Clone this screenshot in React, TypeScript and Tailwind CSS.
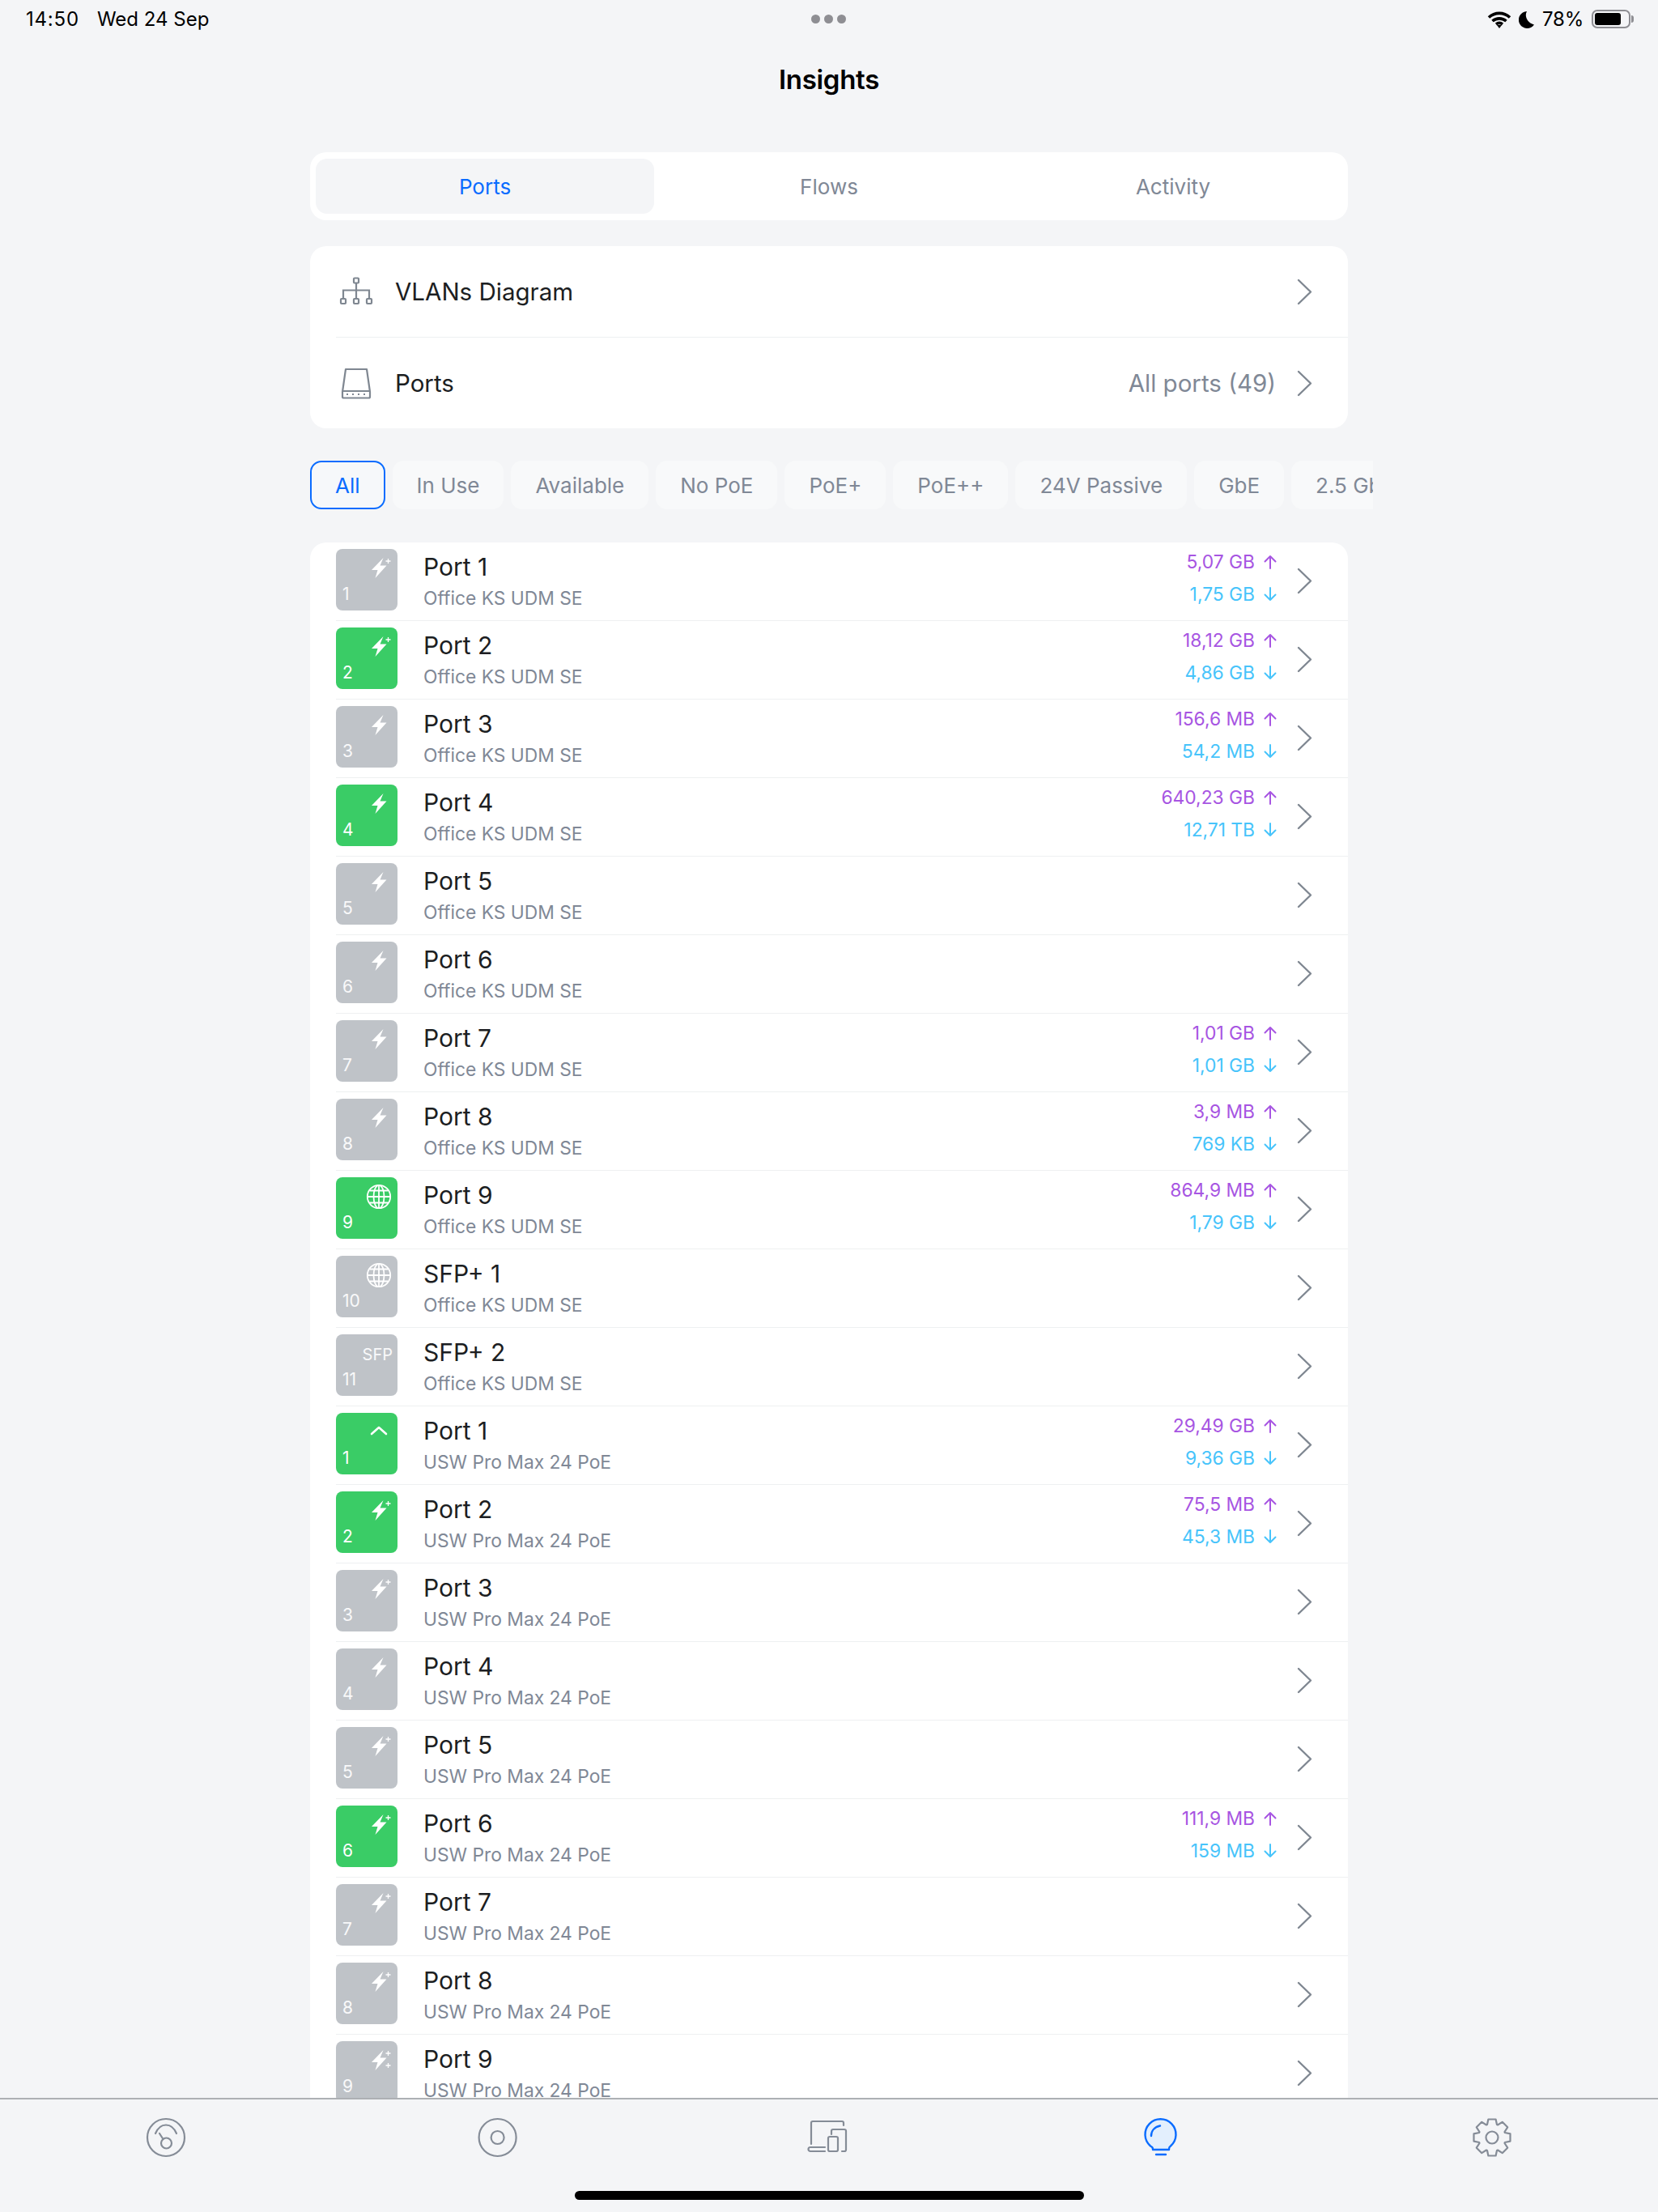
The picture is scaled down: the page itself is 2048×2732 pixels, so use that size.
import { ReactNode } from "react";

type PortIcon = "plus" | "bolt" | "globe" | "sfp" | "up" | "double";

type Port = {
  name: string;
  num: number;
  icon: PortIcon;
  on?: boolean;
  up?: string;
  down?: string;
};

const office: Port[] = [
  { name: "Port 1", num: 1, icon: "plus", up: "5,07 GB", down: "1,75 GB" },
  { name: "Port 2", num: 2, icon: "plus", on: true, up: "18,12 GB", down: "4,86 GB" },
  { name: "Port 3", num: 3, icon: "bolt", up: "156,6 MB", down: "54,2 MB" },
  { name: "Port 4", num: 4, icon: "bolt", on: true, up: "640,23 GB", down: "12,71 TB" },
  { name: "Port 5", num: 5, icon: "bolt" },
  { name: "Port 6", num: 6, icon: "bolt" },
  { name: "Port 7", num: 7, icon: "bolt", up: "1,01 GB", down: "1,01 GB" },
  { name: "Port 8", num: 8, icon: "bolt", up: "3,9 MB", down: "769 KB" },
  { name: "Port 9", num: 9, icon: "globe", on: true, up: "864,9 MB", down: "1,79 GB" },
  { name: "SFP+ 1", num: 10, icon: "globe" },
  { name: "SFP+ 2", num: 11, icon: "sfp" },
];

const usw: Port[] = [
  { name: "Port 1", num: 1, icon: "up", on: true, up: "29,49 GB", down: "9,36 GB" },
  { name: "Port 2", num: 2, icon: "plus", on: true, up: "75,5 MB", down: "45,3 MB" },
  { name: "Port 3", num: 3, icon: "plus" },
  { name: "Port 4", num: 4, icon: "bolt" },
  { name: "Port 5", num: 5, icon: "plus" },
  { name: "Port 6", num: 6, icon: "plus", on: true, up: "111,9 MB", down: "159 MB" },
  { name: "Port 7", num: 7, icon: "plus" },
  { name: "Port 8", num: 8, icon: "plus" },
  { name: "Port 9", num: 9, icon: "double" },
];

const chips = ["All", "In Use", "Available", "No PoE", "PoE+", "PoE++", "24V Passive", "GbE", "2.5 GbE"];

// gear outline, 8 teeth, in a 70 box
const gearPath = () => {
  const pts: string[] = [];
  for (let i = 0; i < 8; i++) {
    const a = (i * Math.PI) / 4 - Math.PI / 2;
    const step = 0.2;
    const rows: [number, number][] = [
      [17, a - 0.36],
      [23, a - step],
      [23, a + step],
      [17, a + 0.36],
    ];
    rows.forEach(([r, t]) => {
      pts.push(`${(35 + r * Math.cos(t)).toFixed(1)} ${(35 + r * Math.sin(t)).toFixed(1)}`);
    });
  }
  return "M" + pts.join("L") + "Z";
};

const Chevron = () => (
  <svg width="19" height="33" viewBox="0 0 19 33" fill="none" className="shrink-0">
    <path d="M2 2l15 14.5L2 31" stroke="#7f8791" strokeWidth="2.4" strokeLinecap="round" strokeLinejoin="round" />
  </svg>
);

const Bolt = () => <path d="M14.5 0 0 15h7.5L4.5 25 18.5 9.5H10.500z" fill="#fff" />;

const TileIcon = ({ icon }: { icon: PortIcon }) => {
  if (icon === "sfp") {
    return <span className="absolute top-[13px] right-[6px] text-[20px] leading-6 text-white/90">SFP</span>;
  }
  if (icon === "globe") {
    return (
      <svg width="32" height="32" viewBox="0 0 32 32" fill="none" stroke="#fff" strokeWidth="1.8" className="absolute top-[8px] left-[37px]">
        <circle cx="16" cy="16" r="14.2" />
        <ellipse cx="16" cy="16" rx="6.5" ry="14.2" />
        <path d="M16 2v28M2 16h28M4.5 8.5h23M4.5 23.5h23" />
      </svg>
    );
  }
  if (icon === "up") {
    return (
      <svg width="22" height="14" viewBox="0 0 22 14" fill="none" className="absolute top-[15px] left-[42px]">
        <path d="M2 11l9-8 9 8" stroke="#fff" strokeWidth="2.6" strokeLinecap="round" strokeLinejoin="round" />
      </svg>
    );
  }
  return (
    <svg width="28" height="28" viewBox="0 0 28 28" fill="none" className="absolute top-[10px] left-[42px]">
      <g transform="translate(2 1)">
        <Bolt />
      </g>
      {(icon === "plus" || icon === "double") && <path d="M19.5 5h6M22.5 2v6" stroke="#fff" strokeWidth="1.3" />}
      {icon === "double" && <path d="M19.5 20h6M22.5 17v6" stroke="#fff" strokeWidth="1.3" />}
    </svg>
  );
};

const ArrowUp = () => (
  <svg width="16" height="18" viewBox="0 0 16 18" fill="none" stroke="#a755e2" strokeWidth="2">
    <path d="M8 17V2M1.5 8.5 8 2l6.5 6.5" strokeLinecap="round" strokeLinejoin="round" />
  </svg>
);

const ArrowDown = () => (
  <svg width="16" height="18" viewBox="0 0 16 18" fill="none" stroke="#47c4fb" strokeWidth="2">
    <path d="M8 1v15M1.5 9.5 8 16l6.5-6.5" strokeLinecap="round" strokeLinejoin="round" />
  </svg>
);

const Row = ({ port, model }: { port: Port; model: string }) => (
  <div className="flex items-center h-[97px] pt-2 pb-3 pr-[44px] border-b border-[#eef0f1]">
    <div className={`relative w-[76px] h-[76px] rounded-[8px] shrink-0 ${port.on ? "bg-[#3acc66]" : "bg-[#bfc3c8]"}`}>
      <TileIcon icon={port.icon} />
      <span className={`absolute left-[8px] bottom-[7px] text-[21px] leading-[26px] ${port.on ? "text-white" : "text-white/90"}`}>{port.num}</span>
    </div>
    <div className="ml-[32px] flex-1 self-start">
      <div className="text-[30px] leading-9 text-[#1c1e22] mt-[4px]">{port.name}</div>
      <div className="text-[22.8px] leading-7 text-[#808896] mt-[7px]">{model}</div>
    </div>
    {port.up && (
      <div className="self-start mt-[2px] text-[22.8px] leading-7 text-right">
        <div className="flex items-center justify-end gap-[11px] text-[#a755e2]">
          {port.up}
          <ArrowUp />
        </div>
        <div className="flex items-center justify-end gap-[11px] text-[#47c4fb] mt-[12px]">
          {port.down}
          <ArrowDown />
        </div>
      </div>
    )}
    <div className="ml-[25px] mt-[2px]">
      <Chevron />
    </div>
  </div>
);

const NavIcon = ({ children }: { children: ReactNode }) => (
  <div className="flex justify-center">
    <svg width="70" height="70" viewBox="0 0 70 70" fill="none" stroke="#858c97" strokeWidth="2.2" strokeLinecap="round" strokeLinejoin="round">
      {children}
    </svg>
  </div>
);

export default function App() {
  return (
    <div className="h-[2732px] w-[2048px] flex flex-col overflow-hidden bg-[#f4f5f7] font-['Inter',sans-serif]">
      {/* status bar */}
      <div className="grid grid-cols-3 items-center h-[47px] pl-[30px] pr-[30px] text-[24px] text-black shrink-0">
        <div className="flex gap-[22px] ml-[2px]">
          <span className="tracking-[0.8px]">14:50</span>
          <span>Wed 24 Sep</span>
        </div>
        <div className="flex justify-center gap-[5px]">
          <span className="w-[11px] h-[11px] rounded-full bg-[#8e8e93]" />
          <span className="w-[11px] h-[11px] rounded-full bg-[#8e8e93]" />
          <span className="w-[11px] h-[11px] rounded-full bg-[#8e8e93]" />
        </div>
        <div className="flex items-center justify-end">
          <svg width="30" height="24" viewBox="0 0 30 24" fill="none" stroke="#000" strokeWidth="3.6">
            <path d="M2 9.5a19 19 0 0 1 26 0M6.5 14a13 13 0 0 1 17 0M11 18a6.5 6.5 0 0 1 8 0" />
            <path d="M15 23l-3-4h6z" fill="#000" stroke="none" />
          </svg>
          <svg width="20" height="24" viewBox="0 0 20 24" className="ml-[9px]">
            <path d="M10 2C7 7 9.500 16 19 18.500A10.500 10.500 0 1 1 10 2z" fill="#000" />
          </svg>
          <span className="ml-[9px] tracking-[-0.2px]">78%</span>
          <div className="ml-[10px] w-[48px] h-[23px] rounded-[7px] border-2 border-[#8e8e93] p-[2px]">
            <div className="w-[32px] h-full rounded-[3px] bg-black" />
          </div>
          <span className="ml-[1px] w-[3px] h-[9px] rounded-r-full bg-[#8e8e93]" />
        </div>
      </div>

      <h1 className="text-center text-[33px] leading-10 font-semibold text-black mt-[31px] tracking-[-0.3px] shrink-0">Insights</h1>

      <main className="flex-1 min-h-0 overflow-hidden pl-[383px] pr-[383px] pt-[70px]">
        {/* segmented */}
        <div className="grid grid-cols-3 gap-[7px] h-[84px] py-2 px-[7px] rounded-[20px] bg-white">
          <div className="flex items-center justify-center rounded-[14px] bg-[#f4f5f7] text-[26px] text-[#0a6cff]">Ports</div>
          <div className="flex items-center justify-center text-[26px] text-[#808896]">Flows</div>
          <div className="flex items-center justify-center text-[26px] text-[#808896]">Activity</div>
        </div>

        {/* links */}
        <div className="mt-[32px] rounded-[20px] bg-white">
          <div className="flex items-center h-[113px] ml-[32px] pr-[44px] border-b border-[#eef0f1]">
            <svg width="44" height="36" viewBox="0 0 44 36" fill="none" stroke="#7f8791" strokeWidth="2.2" className="shrink-0 ml-[3px]">
              <rect x="19" y="1.5" width="6" height="6" rx="1" />
              <rect x="3" y="27" width="6" height="6" rx="1" />
              <rect x="19" y="27" width="6" height="6" rx="1" />
              <rect x="35" y="27" width="6" height="6" rx="1" />
              <path d="M22 7.5V27M6 27V16.5h32V27" />
            </svg>
            <span className="ml-[26px] flex-1 text-[29.5px] text-[#1c1e22]">VLANs Diagram</span>
            <Chevron />
          </div>
          <div className="flex items-center h-[112px] ml-[32px] pr-[44px]">
            <svg width="44" height="40" viewBox="0 0 44 40" fill="none" stroke="#7f8791" strokeWidth="2.2" strokeLinejoin="round" className="shrink-0 ml-[3px]">
              <path d="M9 3h26l4 28v6a1.5 1.5 0 0 1-1.5 1.5h-31A1.5 1.5 0 0 1 5 37v-6z" />
              <path d="M5 30h34" />
              <path d="M10 34h24" strokeDasharray="2 5" />
            </svg>
            <span className="ml-[26px] flex-1 text-[29.5px] text-[#1c1e22]">Ports</span>
            <span className="text-[29.5px] text-[#808896] mr-[26px]">All ports (49)</span>
            <Chevron />
          </div>
        </div>

        {/* filter chips */}
        <div className="mt-[40px] flex gap-[9px] w-[1313px] overflow-hidden">
          {chips.map((c, i) => (
            <div
              key={c}
              className={`h-[60px] flex items-center rounded-[14px] text-[26px] whitespace-nowrap shrink-0 ${
                i === 0 ? "px-[29px] border-2 border-[#0a6cff] text-[#0a6cff] bg-[#f6f8fa]" : "px-[30px] bg-[#f8f9fa] text-[#808896]"
              }`}
            >
              {c}
            </div>
          ))}
        </div>

        {/* port list */}
        <div className="mt-[41px] rounded-t-[20px] bg-white pl-[32px]">
          {office.map((p) => (
            <Row key={`o${p.num}`} port={p} model="Office KS UDM SE" />
          ))}
          {usw.map((p) => (
            <Row key={`u${p.num}`} port={p} model="USW Pro Max 24 PoE" />
          ))}
        </div>
      </main>

      {/* tab bar */}
      <div className="shrink-0 h-[141px] border-t-2 border-[#adb0b4] bg-[#f4f5f7]">
        <div className="grid grid-cols-5 pt-[12px]">
          <NavIcon>
            <circle cx="35" cy="35" r="23" />
            <path d="M22 30c3-7 8-10.5 13-10.5S45 23 48 30" />
            <circle cx="35.5" cy="42" r="6.5" />
            <path d="M27 30l4.5 7" />
          </NavIcon>
          <NavIcon>
            <circle cx="35.6" cy="35" r="23" />
            <circle cx="35.6" cy="35" r="8" />
          </NavIcon>
          <NavIcon>
            <path d="M13 43V17a2 2 0 0 1 2-2h36a2 2 0 0 1 2 2v3" />
            <path d="M30 47H12a2.5 2.5 0 0 0 0 5h18" />
            <path d="M38 31v-4a2 2 0 0 1 2-2h14a2 2 0 0 1 2 2v23a2 2 0 0 1-2 2h-3" />
            <rect x="34" y="34" width="12" height="18" rx="2" />
          </NavIcon>
          <NavIcon>
            <g stroke="#0a6cff" strokeWidth="2.4">
              <path d="M25 50v-1c0-1.5-1-2.5-3-3.5A19 19 0 1 1 47 45.5c-1.5 1-2 2-2 3.5v1z" fill="#e3effd" />
              <path d="M23 33c0-6 4-11 11-12.5" />
              <path d="M29 56h12" />
            </g>
          </NavIcon>
          <NavIcon>
            <path d={gearPath()} />
            <circle cx="35" cy="35" r="7.5" />
          </NavIcon>
        </div>
        <div className="mt-[31px] mx-auto w-[629px] h-[11px] rounded-full bg-black" />
      </div>
    </div>
  );
}
